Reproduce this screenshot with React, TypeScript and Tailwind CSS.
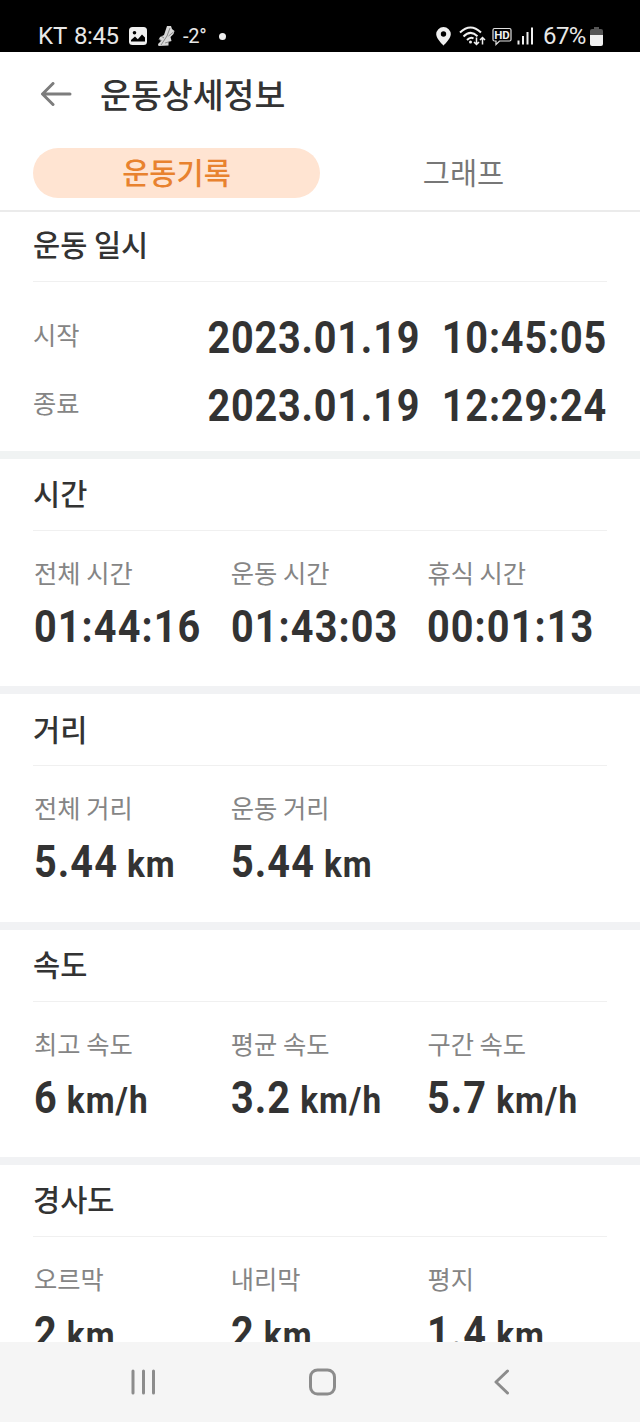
type Item = { label: string; value: string; unit?: string };

const times = [
    { label: '시작', date: '2023.01.19', time: '10:45:05' },
    { label: '종료', date: '2023.01.19', time: '12:29:24' },
];

const sections: { title: string; items: Item[] }[] = [
    {
        title: '시간',
        items: [
            { label: '전체 시간', value: '01:44:16' },
            { label: '운동 시간', value: '01:43:03' },
            { label: '휴식 시간', value: '00:01:13' },
        ],
    },
    {
        title: '거리',
        items: [
            { label: '전체 거리', value: '5.44', unit: 'km' },
            { label: '운동 거리', value: '5.44', unit: 'km' },
        ],
    },
    {
        title: '속도',
        items: [
            { label: '최고 속도', value: '6', unit: 'km/h' },
            { label: '평균 속도', value: '3.2', unit: 'km/h' },
            { label: '구간 속도', value: '5.7', unit: 'km/h' },
        ],
    },
    {
        title: '경사도',
        items: [
            { label: '오르막', value: '2', unit: 'km' },
            { label: '내리막', value: '2', unit: 'km' },
            { label: '평지', value: '1.4', unit: 'km' },
        ],
    },
];

function StatusBar() {
    return (
        <div className="flex h-[52px] shrink-0 items-end justify-between bg-black pr-[37px] pb-[3px] pl-[38px] font-['Roboto',sans-serif] text-[24px] leading-[26px] text-[#e8e8e8]">
            <div className="flex items-center">
                <span className="w-[36px] whitespace-nowrap">KT</span>
                <span className="w-[55px] whitespace-nowrap tracking-[-0.4px]">8:45</span>
                {/* Gallery */}
                <svg width="18" height="18" viewBox="0 0 18 18">
                    <rect width="18" height="18" rx="3.5" fill="#f0f0f0" />
                    <circle cx="5.5" cy="5.8" r="1.8" fill="#000" />
                    <path d="M2 14.5V13l4-3.500 2.800 2.700L13 7.500l3 3v4z" fill="#000" />
                </svg>
                {/* Exercise app */}
                <svg className="ml-[10px]" width="18" height="22" viewBox="0 0 18 22">
                    <path d="m10 1 4 0 1 3 2.500 2-1 3-3 3 1 4-3 1 0 3.500-10 .5-.5-2 3-3-2-2 1-2 4-2z" fill="#d8d8d8" />
                    <path d="m13 3-3 8-6 9M16.500 7l-5 4M1.500 14.500l3 1M8 18l5-1.500M4 11l3 2" fill="none" stroke="#666" strokeWidth="0.7" />
                </svg>
                <span className="ml-[8px] w-[23px] whitespace-nowrap text-[20px] tracking-[-0.3px]">-2°</span>
                <span className="ml-[13px] size-[7px] rounded-full bg-[#f0f0f0]" />
            </div>
            <div className="flex items-center">
                {/* Location */}
                <svg width="15" height="19" viewBox="0 0 15 19">
                    <path d="M7.5 0A7.3 7.3 0 0 0 .2 7.3C.2 12 7.5 18.5 7.5 18.5s7.3-6.5 7.3-11.2A7.3 7.3 0 0 0 7.5 0z" fill="#f0f0f0" />
                    <circle cx="7.5" cy="7" r="2.7" fill="#000" />
                </svg>
                {/* Wi-Fi with transfer arrows */}
                <svg className="ml-[8px]" width="27" height="20" viewBox="0 0 27 20" fill="none" stroke="#f0f0f0" strokeWidth="2">
                    <path d="M1 6.500Q11.500-3.500 22 6.500M4.500 10.500Q11.500 3.500 18.500 10.200M8 14Q11.500 10.500 14.500 12.500" />
                    <circle cx="11.5" cy="16" r="1.5" fill="#f0f0f0" stroke="none" />
                    <path d="M17.500 11.500v7M15 16l2.500 2.500L20 16M23.500 18.500v-7M21 14l2.500-2.500L26 14" strokeWidth="1.5" />
                </svg>
                {/* HD voice */}
                <svg className="ml-[6px]" width="20" height="19" viewBox="0 0 20 19" fill="none" stroke="#e0e0e0">
                    <path d="M2.500 1.500h15q1.500 0 1.500 1.500v9.500q0 1.500-1.500 1.500H7.500L4 17.500V14H2.500Q1 14 1 12.500V3q0-1.500 1.500-1.500z" strokeWidth="1.2" />
                    <text x="10" y="12" textAnchor="middle" fill="#f0f0f0" stroke="none" fontSize="11.5" fontWeight="700">HD</text>
                </svg>
                {/* Signal */}
                <svg className="ml-[5px]" width="17" height="18" viewBox="0 0 17 18" fill="#f0f0f0">
                    <rect x="0.5" y="13.5" width="2" height="4" />
                    <rect x="5" y="9" width="2" height="8.5" />
                    <rect x="9.5" y="5" width="2" height="12.5" />
                    <rect x="14" y="0.5" width="2" height="17" />
                </svg>
                <span className="ml-[9px] w-[47px] whitespace-nowrap tracking-[-0.6px]">67%</span>
                {/* Battery */}
                <svg width="13" height="19" viewBox="0 0 13 19">
                    <path d="M4 0h5v2h2q2 0 2 2v5H0V4q0-2 2-2h2z" fill="#555" />
                    <path d="M0 8h13v9q0 2-2 2H2q-2 0-2-2z" fill="#f0f0f0" />
                </svg>
            </div>
        </div>
    );
}

function SectionTitle({ children }: { children: string }) {
    return (
        <h2 className="mx-[33px] flex h-[72px] items-center border-b border-[#f0f0f0] pb-[3px] text-[29.5px] leading-none font-medium text-[#333]">
            {children}
        </h2>
    );
}

function Value({ value, unit }: { value: string; unit?: string }) {
    return (
        <div className="flex h-[52px] w-max origin-left scale-x-[0.9] items-baseline font-['Roboto',sans-serif] text-[44px] leading-[52px] font-bold tracking-[1.2px] whitespace-nowrap text-[#333]">
            <span>{value}</span>
            {unit && <span className="ml-[10px] text-[37px]">{unit}</span>}
        </div>
    );
}

function NavBar() {
    return (
        <nav className="flex h-[80px] shrink-0 items-center bg-[#f5f5f5] pl-[131px] text-[#8c8c8c]">
            <svg width="25" height="26" viewBox="0 0 25 26" stroke="currentColor" strokeWidth="3" strokeLinecap="round">
                <path d="M2 2v22M12.500 2v22M22.500 2v22" />
            </svg>
            <svg className="ml-[153px]" width="27" height="28" viewBox="0 0 27 28" fill="none" stroke="currentColor" strokeWidth="3">
                <rect x="1.5" y="2" width="24" height="24" rx="7" />
            </svg>
            <svg className="ml-[158px]" width="16" height="26" viewBox="0 0 16 26" fill="none" stroke="currentColor" strokeWidth="3" strokeLinecap="round" strokeLinejoin="round">
                <path d="M13.500 2 2 13l11.500 11" />
            </svg>
        </nav>
    );
}

export default function App() {
    return (
        <div className="flex h-[1422px] w-[640px] flex-col overflow-hidden bg-white font-['Noto_Sans_CJK_KR',sans-serif]">
            <StatusBar />
            <header className="flex h-[96px] shrink-0 items-center pb-[12px] pl-[41px]">
                <svg width="31" height="24" viewBox="0 0 31 24" fill="none" stroke="#7d7d7d" strokeWidth="3" strokeLinecap="round" strokeLinejoin="round">
                    <path d="M12 1.500 1.500 12 12 22.500M2 12h27" />
                </svg>
                <h1 className="ml-[28px] pb-px text-[33.6px] leading-none font-medium text-[#333]">운동상세정보</h1>
            </header>
            <div className="flex h-[64px] shrink-0 border-b-2 border-[#ebebeb] px-[33px] text-[29.5px] leading-none">
                <button className="h-[50px] w-[287px] rounded-full bg-[#ffe4d2] pb-[3px] font-medium text-[#e8822f]">운동기록</button>
                <button className="h-[50px] w-[287px] pb-[3px] text-[#777]">그래프</button>
            </div>

            <main className="min-h-0 flex-1 overflow-hidden">
                <section className="h-[249px] border-b-8 border-[#f0f3f3]">
                    <div className="-mt-[2px]">
                        <SectionTitle>운동 일시</SectionTitle>
                    </div>
                    <div className="flex flex-col px-[33px] pt-[22px]">
                        {times.map((row) => (
                            <div key={row.label} className="flex h-[68px] shrink-0 items-center justify-between">
                                <span className="pb-[7px] text-[25.3px] leading-none text-[#858585]">{row.label}</span>
                                <div className="flex h-[52px] origin-right scale-x-[0.9] gap-[24px] font-['Roboto',sans-serif] text-[44px] leading-[52px] font-bold tracking-[0.9px] text-[#333]">
                                    <span>{row.date}</span>
                                    <span>{row.time}</span>
                                </div>
                            </div>
                        ))}
                    </div>
                </section>

                {sections.map((section) => (
                    <section key={section.title} className="h-[235.3px] border-b-8 border-[#f1f2f4]">
                        <SectionTitle>{section.title}</SectionTitle>
                        <div className="flex pt-[26px] pl-[34px]">
                            {section.items.map((item) => (
                                <div key={item.label} className="w-[196.7px] shrink-0">
                                    <p className="h-[30px] text-[25.3px] leading-[30px] text-[#858585]">{item.label}</p>
                                    <div className="mt-[14px]">
                                        <Value value={item.value} unit={item.unit} />
                                    </div>
                                </div>
                            ))}
                        </div>
                    </section>
                ))}
            </main>
            <NavBar />
        </div>
    );
}
